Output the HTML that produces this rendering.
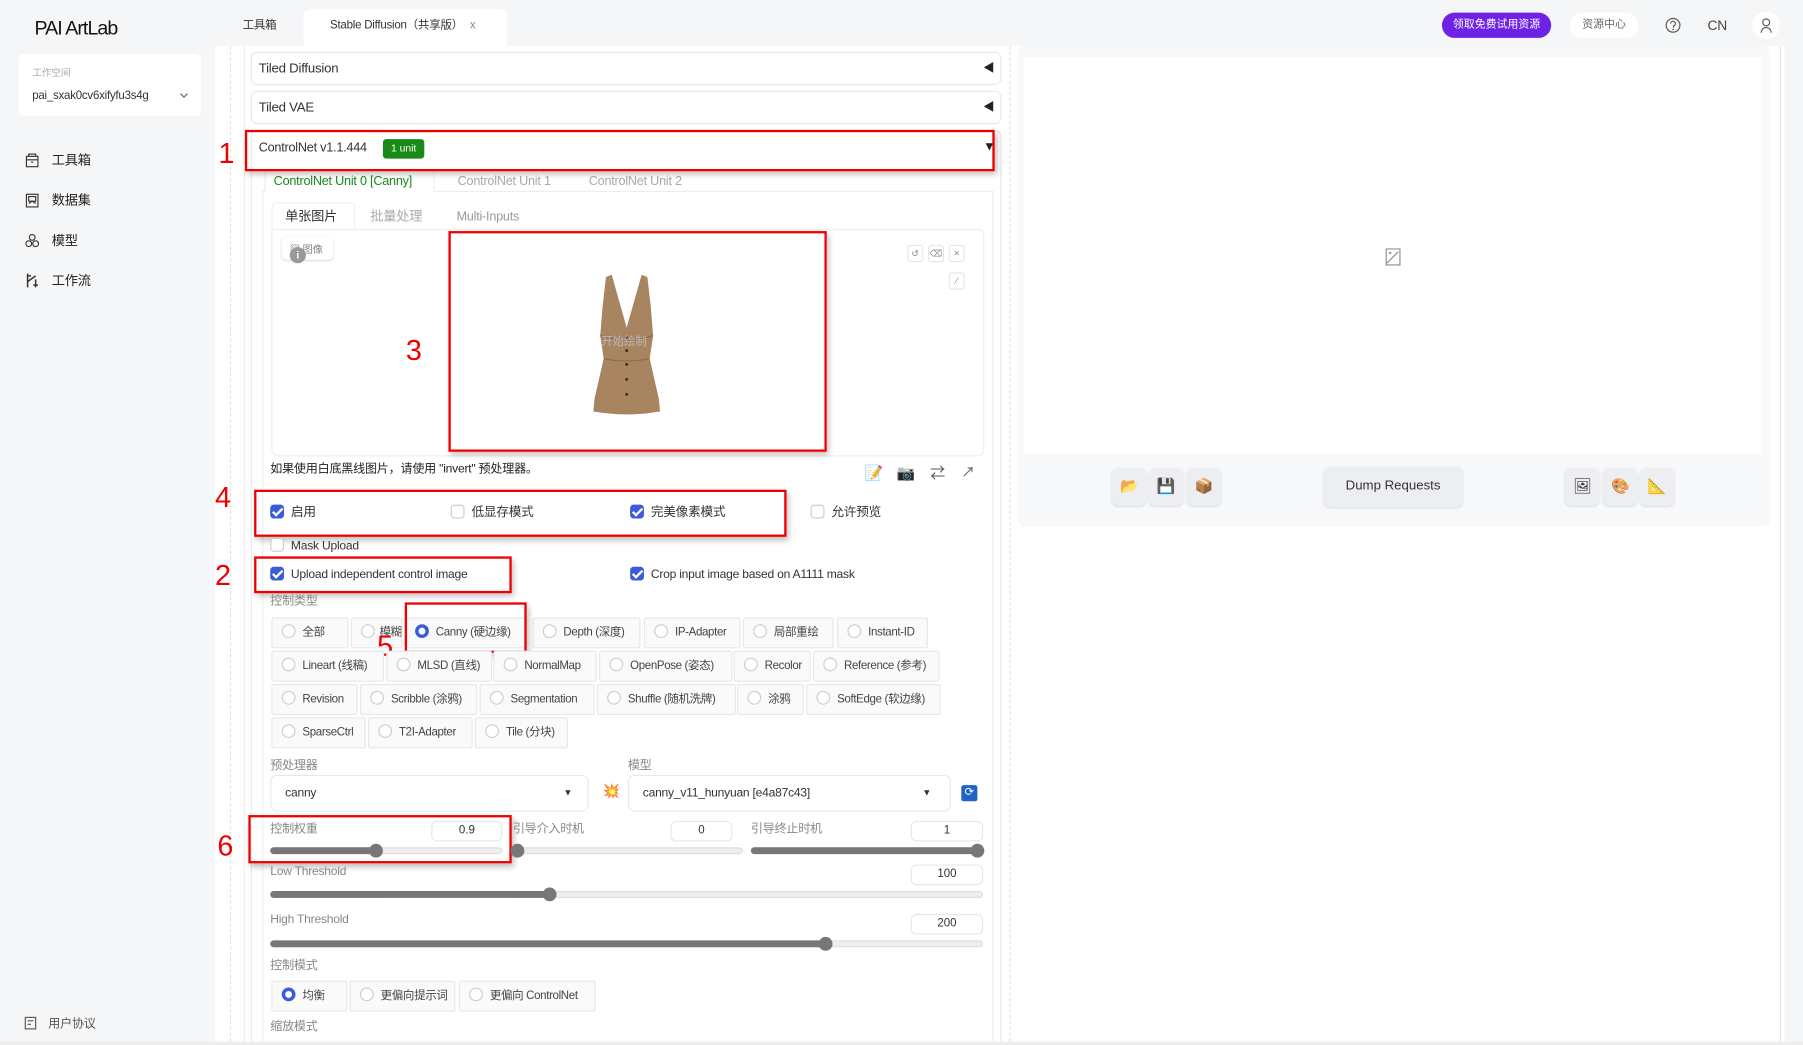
<!DOCTYPE html>
<html><head><meta charset="utf-8">
<style>
*{box-sizing:border-box;margin:0;padding:0}
html,body{width:1803px;height:1045px;overflow:hidden;background:#f5f6f8}
body{font-family:"Liberation Sans","Noto Sans CJK SC",sans-serif;color:#333}
#w{position:absolute;left:0;top:0;width:1568px;height:909px;transform:scale(1.14987,1.1496);transform-origin:0 0;background:#f5f6f8}
.a{position:absolute}
.t{position:absolute;white-space:nowrap;font-size:11px;line-height:14px;letter-spacing:-0.2px}
.box{position:absolute;border:1px solid #e5e7eb;border-radius:6px;background:#fff}
.red{position:absolute;border:2.5px solid #e00;box-shadow:2px 3px 5px rgba(0,0,0,.25)}
.num{position:absolute;color:#e00;font-size:25px;line-height:26px;font-family:"Liberation Sans",sans-serif}
.cb{position:absolute;width:12px;height:12px;border:1px solid #ccc;border-radius:3px;background:#fff}
.cb.on{background:#3b5bdb;border-color:#3b5bdb}
.cb.on:after{content:"";position:absolute;left:3px;top:0px;width:3px;height:7px;border:solid #fff;border-width:0 2px 2px 0;transform:rotate(45deg)}
.rb{position:absolute;border:1px solid #e5e7eb;background:#fafafa;border-radius:2px;height:27px;font-size:10px;line-height:25px;white-space:nowrap;color:#444;letter-spacing:-0.3px;overflow:hidden}
.rb i{display:inline-block;width:12px;height:12px;border:1px solid #ccc;border-radius:50%;vertical-align:-2px;margin:0 6px 0 8px;background:#fff}
.rb i.on{border:3.5px solid #3b5bdb}
.lbl{position:absolute;font-size:10.5px;color:#888;white-space:nowrap;letter-spacing:-0.2px}
.inp{position:absolute;border:1px solid #e5e7eb;border-radius:5px;background:#fff;font-size:10px;text-align:center;line-height:16px;height:18px;color:#333}
.trk{position:absolute;height:6px;border-radius:3px;background:#eee;border:1px solid #ddd}
.fill{position:absolute;height:6px;border-radius:3px;background:#777}
.th{position:absolute;width:12px;height:12px;border-radius:50%;background:#777}
.ib{position:absolute;width:30px;height:33px;border-radius:6px;background:#eceef1;box-shadow:0 1px 2px rgba(0,0,0,.1)}
</style></head><body><div id="w">

<div class="t" style="left:30px;top:15px;font-size:17px;line-height:20px;color:#111;letter-spacing:-0.8px">PAI ArtLab</div>
<div class="t" style="left:211px;top:16px;font-size:10px;color:#333">工具箱</div>
<div class="a" style="left:264px;top:8px;width:177px;height:33px;background:#fff;border-radius:6px 6px 0 0"></div>
<div class="t" style="left:287px;top:16px;font-size:10px;color:#333">Stable Diffusion（共享版）<span style="color:#888;margin-left:6px">x</span></div>
<div class="a" style="left:1254px;top:11px;width:95px;height:22px;border-radius:11px;background:#6d22e6;color:#fff;font-size:9.5px;line-height:22px;text-align:center">领取免费试用资源</div>
<div class="a" style="left:1365px;top:11px;width:60px;height:22px;border-radius:11px;background:#fff;color:#666;font-size:9.5px;line-height:22px;text-align:center">资源中心</div>
<svg class="a" style="left:1448px;top:15px" width="14" height="14" viewBox="0 0 14 14"><circle cx="7" cy="7" r="6" fill="none" stroke="#555" stroke-width="1"/><path d="M5 5.5a2 2 0 1 1 2.5 1.9V9" fill="none" stroke="#555"/><circle cx="7" cy="10.7" r=".7" fill="#555"/></svg>
<div class="t" style="left:1485px;top:15px;font-size:12px;color:#444">CN</div>
<div class="a" style="left:1524px;top:10px;width:24px;height:24px;border-radius:50%;background:#fff"></div>
<svg class="a" style="left:1530px;top:15px" width="12" height="14" viewBox="0 0 12 14"><circle cx="6" cy="4.5" r="3" fill="none" stroke="#555"/><path d="M1.5 13.5c.5-3 2-4.5 4.5-4.5s4 1.5 4.5 4.5" fill="none" stroke="#555"/></svg>

<div class="a" style="left:16px;top:47px;width:159px;height:54px;background:#fff;border-radius:5px"></div>
<div class="t" style="left:28px;top:56px;font-size:8.5px;color:#aaa">工作空间</div>
<div class="t" style="left:28px;top:77px;font-size:10px;color:#333">pai_sxak0cv6xifyfu3s4g</div>
<svg class="a" style="left:156px;top:80px" width="8" height="6" viewBox="0 0 8 6"><path d="M1 1.5l3 3 3-3" fill="none" stroke="#666"/></svg>
<svg class="a" style="left:22px;top:133px" width="12" height="13" viewBox="0 0 12 13"><rect x="1" y="3" width="10" height="9" fill="none" stroke="#333"/><path d="M3 3V1h6v2M1 6h10M5 8h2" stroke="#333" fill="none"/></svg>
<div class="t" style="left:45px;top:133px;font-size:11.5px;color:#222">工具箱</div>
<svg class="a" style="left:22px;top:168px" width="12" height="13" viewBox="0 0 12 13"><rect x="1" y="1" width="10" height="11" fill="none" stroke="#333"/><path d="M3 3h6v4H3zM3 9l3-2 3 2" stroke="#333" fill="none"/></svg>
<div class="t" style="left:45px;top:168px;font-size:11.5px;color:#222">数据集</div>
<svg class="a" style="left:22px;top:203px" width="12" height="13" viewBox="0 0 12 13"><circle cx="6" cy="3.5" r="2.5" fill="none" stroke="#333"/><circle cx="3" cy="9" r="2.5" fill="none" stroke="#333"/><circle cx="9" cy="9" r="2.5" fill="none" stroke="#333"/></svg>
<div class="t" style="left:45px;top:203px;font-size:11.5px;color:#222">模型</div>
<svg class="a" style="left:22px;top:237px" width="12" height="14" viewBox="0 0 12 14"><path d="M2 1v12M2 3h3M2 8l7-5M9 6v7M7 11h4" stroke="#333" fill="none" stroke-width="1.3"/></svg>
<div class="t" style="left:45px;top:238px;font-size:11.5px;color:#222">工作流</div>
<svg class="a" style="left:21px;top:884px" width="12" height="12" viewBox="0 0 12 12"><rect x="1" y="1" width="9" height="10" fill="none" stroke="#555"/><path d="M3 4h5M3 7h3" stroke="#555"/></svg>
<div class="t" style="left:42px;top:884px;font-size:10.5px;color:#555">用户协议</div>

<div class="a" style="left:187px;top:40px;width:1365px;height:866px;background:#fff"></div>
<div class="a" style="left:200px;top:40px;width:1px;height:866px;border-left:1px dashed #e3e3e3"></div>
<div class="a" style="left:212px;top:40px;width:1px;height:866px;background:#eee"></div>
<div class="a" style="left:878px;top:40px;width:1px;height:866px;border-left:1px dashed #e3e3e3"></div>
<div class="a" style="left:1548px;top:40px;width:1px;height:866px;background:#e5e5e5"></div>
<div class="a" style="left:0;top:906px;width:1568px;height:3px;background:#eee"></div>

<div class="box" style="left:218px;top:45px;width:653px;height:29px"></div>
<div class="t" style="left:225px;top:53px;font-size:11.5px;color:#333">Tiled Diffusion</div>
<div class="t" style="left:855px;top:53px;font-size:10px;color:#222">◀</div>
<div class="box" style="left:218px;top:79px;width:653px;height:29px"></div>
<div class="t" style="left:225px;top:87px;font-size:11.5px;color:#333">Tiled VAE</div>
<div class="t" style="left:855px;top:87px;font-size:10px;color:#222">◀</div>
<div class="box" style="left:218px;top:113px;width:653px;height:793px;border-bottom:none;border-radius:6px 6px 0 0"></div>
<div class="t" style="left:225px;top:122px;font-size:11px;color:#333">ControlNet v1.1.444</div>
<div class="a" style="left:333px;top:121px;width:36px;height:17px;background:#178a17;border-radius:3px;color:#fff;font-size:9px;line-height:17px;text-align:center">1 unit</div>
<div class="t" style="left:855px;top:121px;font-size:11px;color:#222">▼</div>

<div class="a" style="left:228px;top:166px;width:636px;height:740px;border:1px solid #eee;border-bottom:none"></div>
<div class="a" style="left:230px;top:147px;width:148px;height:21px;background:#fff;border:1px solid #eee;border-bottom:none;border-radius:4px 4px 0 0"></div>
<div class="t" style="left:238px;top:151px;font-size:11px;color:#1a8a1a">ControlNet Unit 0 [Canny]</div>
<div class="t" style="left:398px;top:151px;font-size:11px;color:#aaa">ControlNet Unit 1</div>
<div class="t" style="left:512px;top:151px;font-size:11px;color:#aaa">ControlNet Unit 2</div>

<div class="a" style="left:236px;top:176px;width:73px;height:24px;background:#fff;border:1px solid #eee;border-bottom:none;border-radius:4px 4px 0 0"></div>
<div class="t" style="left:248px;top:182px;font-size:11.5px;color:#333">单张图片</div>
<div class="t" style="left:322px;top:182px;font-size:11.5px;color:#aaa">批量处理</div>
<div class="t" style="left:397px;top:182px;font-size:11px;color:#999">Multi-Inputs</div>
<div class="a" style="left:236px;top:199px;width:620px;height:198px;border:1px solid #eee;border-radius:0 6px 6px 6px;background:#fff"></div>
<div class="a" style="left:245px;top:206px;width:45px;height:20px;border-radius:4px;box-shadow:0 1px 2px rgba(0,0,0,.15);background:#fff"></div>
<div class="t" style="left:252px;top:210px;font-size:9px;color:#888">▧ 图像</div>
<div class="a" style="left:252px;top:215px;width:14px;height:14px;border-radius:50%;background:#999;color:#fff;font-size:9px;text-align:center;line-height:14px;font-weight:bold">i</div>
<div class="a" style="left:789px;top:213px;width:14px;height:15px;border:1px solid #e5e5e5;border-radius:3px;font-size:8px;color:#888;text-align:center;line-height:13px">↺</div>
<div class="a" style="left:807px;top:213px;width:14px;height:15px;border:1px solid #e5e5e5;border-radius:3px;font-size:8px;color:#888;text-align:center;line-height:13px">⌫</div>
<div class="a" style="left:825px;top:213px;width:14px;height:15px;border:1px solid #e5e5e5;border-radius:3px;font-size:9px;color:#888;text-align:center;line-height:13px">×</div>
<div class="a" style="left:825px;top:237px;width:14px;height:15px;border:1px solid #e5e5e5;border-radius:3px;font-size:8px;color:#888;text-align:center;line-height:13px">⁄</div>

<svg class="a" style="left:505px;top:237px" width="80" height="126" viewBox="0 0 80 126">
<path d="M22 4 L27 2 L40 48 L53 2 L58 4 L61 30 L63 55 L60 75 L68 110 L69 121 Q40 126 11 121 L12 110 L20 75 L17 55 L19 30 Z" fill="#a98460"/>
<path d="M17 55 Q40 62 63 55 M20 75 Q40 79 60 75" stroke="#8f6c4a" fill="none" stroke-width="1"/>
<g fill="#333"><circle cx="40" cy="57" r="1.3"/><circle cx="40" cy="68" r="1.3"/><circle cx="40" cy="80" r="1.3"/><circle cx="40" cy="93" r="1.3"/><circle cx="40" cy="106" r="1.3"/></g>
</svg>
<div class="t" style="left:523px;top:291px;font-size:10px;color:#bbb">开始绘制</div>
<div class="red" style="left:390px;top:201px;width:329px;height:192px"></div>
<div class="num" style="left:353px;top:292px">3</div>

<div class="t" style="left:235px;top:401px;font-size:10.5px;color:#222">如果使用白底黑线图片，请使用 "invert" 预处理器。</div>
<div class="t" style="left:752px;top:405px;font-size:13px">📝</div>
<div class="t" style="left:780px;top:405px;font-size:13px">📷</div>
<div class="t" style="left:809px;top:405px;font-size:13px;color:#555">⇄</div>
<div class="t" style="left:836px;top:404px;font-size:12px;color:#555">↗</div>

<div class="cb on" style="left:235px;top:439px"></div><div class="t" style="left:253px;top:439px">启用</div>
<div class="cb" style="left:392px;top:439px"></div><div class="t" style="left:410px;top:439px">低显存模式</div>
<div class="cb on" style="left:548px;top:439px"></div><div class="t" style="left:566px;top:439px">完美像素模式</div>
<div class="cb" style="left:705px;top:439px"></div><div class="t" style="left:723px;top:439px">允许预览</div>
<div class="red" style="left:221px;top:426px;width:463px;height:41px"></div>
<div class="num" style="left:187px;top:420px">4</div>
<div class="cb" style="left:235px;top:468px"></div><div class="t" style="left:253px;top:468px;font-size:10.5px">Mask Upload</div>
<div class="cb on" style="left:235px;top:493px"></div><div class="t" style="left:253px;top:493px;font-size:10.5px">Upload independent control image</div>
<div class="cb on" style="left:548px;top:493px"></div><div class="t" style="left:566px;top:493px;font-size:10.5px">Crop input image based on A1111 mask</div>
<div class="red" style="left:221px;top:484px;width:224px;height:32px"></div>
<div class="num" style="left:187px;top:488px">2</div>

<div class="lbl" style="left:235px;top:515px">控制类型</div>
<div class="rb" style="left:236px;top:537px;width:67px"><i></i>全部</div>
<div class="rb" style="left:305px;top:537px;width:45px"><i style="margin-right:4px"></i>模糊</div>
<div class="rb" style="left:352px;top:537px;width:106px"><i class="on"></i>Canny (硬边缘)</div>
<div class="rb" style="left:463px;top:537px;width:94px"><i></i>Depth (深度)</div>
<div class="rb" style="left:560px;top:537px;width:84px"><i></i>IP-Adapter</div>
<div class="rb" style="left:646px;top:537px;width:79px"><i></i>局部重绘</div>
<div class="rb" style="left:728px;top:537px;width:79px"><i></i>Instant-ID</div>
<div class="red" style="left:352px;top:524px;width:106px;height:44px"></div>
<div class="num" style="left:328px;top:549px">5</div>
<div class="rb" style="left:236px;top:566px;width:98px"><i></i>Lineart (线稿)</div>
<div class="rb" style="left:336px;top:566px;width:92px"><i></i>MLSD (直线)</div>
<div class="rb" style="left:429px;top:566px;width:90px"><i></i>NormalMap</div>
<div class="rb" style="left:521px;top:566px;width:116px"><i></i>OpenPose (姿态)</div>
<div class="rb" style="left:638px;top:566px;width:67px"><i></i>Recolor</div>
<div class="rb" style="left:707px;top:566px;width:110px"><i></i>Reference (参考)</div>
<div class="rb" style="left:236px;top:595px;width:75px"><i></i>Revision</div>
<div class="rb" style="left:313px;top:595px;width:102px"><i></i>Scribble (涂鸦)</div>
<div class="rb" style="left:417px;top:595px;width:100px"><i></i>Segmentation</div>
<div class="rb" style="left:519px;top:595px;width:121px"><i></i>Shuffle (随机洗牌)</div>
<div class="rb" style="left:641px;top:595px;width:58px"><i></i>涂鸦</div>
<div class="rb" style="left:701px;top:595px;width:117px"><i></i>SoftEdge (软边缘)</div>
<div class="rb" style="left:236px;top:624px;width:82px"><i></i>SparseCtrl</div>
<div class="rb" style="left:320px;top:624px;width:91px"><i></i>T2I-Adapter</div>
<div class="rb" style="left:413px;top:624px;width:81px"><i></i>Tile (分块)</div>

<div class="lbl" style="left:235px;top:658px">预处理器</div>
<div class="lbl" style="left:546px;top:658px">模型</div>
<div class="a" style="left:235px;top:674px;width:277px;height:32px;border:1px solid #e8e8e8;border-radius:6px"></div>
<div class="t" style="left:248px;top:683px;font-size:10.5px">canny</div>
<div class="t" style="left:490px;top:683px;font-size:8px">▼</div>
<div class="t" style="left:524px;top:681px;font-size:12px">💥</div>
<div class="a" style="left:546px;top:674px;width:281px;height:32px;border:1px solid #e8e8e8;border-radius:6px"></div>
<div class="t" style="left:559px;top:683px;font-size:10.5px">canny_v11_hunyuan [e4a87c43]</div>
<div class="t" style="left:802px;top:683px;font-size:8px">▼</div>
<div class="a" style="left:836px;top:683px;width:14px;height:14px;background:#1f63c6;border-radius:2px;color:#fff;font-size:10px;text-align:center;line-height:14px">⟳</div>

<div class="lbl" style="left:235px;top:713px">控制权重</div>
<div class="inp" style="left:375px;top:714px;width:62px">0.9</div>
<div class="trk" style="left:235px;top:737px;width:202px"></div><div class="fill" style="left:235px;top:737px;width:94px"></div><div class="th" style="left:321px;top:734px"></div>
<div class="red" style="left:216px;top:709px;width:229px;height:42px"></div>
<div class="num" style="left:189px;top:723px">6</div>
<div class="lbl" style="left:446px;top:713px">引导介入时机</div>
<div class="inp" style="left:583px;top:714px;width:54px">0</div>
<div class="trk" style="left:446px;top:737px;width:200px"></div><div class="th" style="left:444px;top:734px"></div>
<div class="lbl" style="left:653px;top:713px">引导终止时机</div>
<div class="inp" style="left:792px;top:714px;width:63px">1</div>
<div class="trk" style="left:653px;top:737px;width:202px"></div><div class="fill" style="left:653px;top:737px;width:200px"></div><div class="th" style="left:844px;top:734px"></div>
<div class="lbl" style="left:235px;top:752px">Low Threshold</div>
<div class="inp" style="left:792px;top:752px;width:63px">100</div>
<div class="trk" style="left:235px;top:775px;width:620px"></div><div class="fill" style="left:235px;top:775px;width:245px"></div><div class="th" style="left:472px;top:772px"></div>
<div class="lbl" style="left:235px;top:794px">High Threshold</div>
<div class="inp" style="left:792px;top:795px;width:63px">200</div>
<div class="trk" style="left:235px;top:818px;width:620px"></div><div class="fill" style="left:235px;top:818px;width:485px"></div><div class="th" style="left:712px;top:815px"></div>

<div class="lbl" style="left:235px;top:832px">控制模式</div>
<div class="rb" style="left:236px;top:853px;width:66px"><i class="on"></i>均衡</div>
<div class="rb" style="left:304px;top:853px;width:92px"><i></i>更偏向提示词</div>
<div class="rb" style="left:399px;top:853px;width:119px"><i></i>更偏向 ControlNet</div>
<div class="lbl" style="left:235px;top:885px">缩放模式</div>

<div class="red" style="left:213px;top:113px;width:652px;height:36px"></div>
<div class="num" style="left:190px;top:121px">1</div>

<div class="a" style="left:885px;top:40px;width:654px;height:418px;background:#f7f8fa;border-radius:6px"></div>
<div class="a" style="left:891px;top:50px;width:641px;height:345px;background:#fff"></div>
<svg class="a" style="left:1205px;top:216px" width="13" height="15" viewBox="0 0 13 15"><rect x=".5" y=".5" width="12" height="14" fill="none" stroke="#888"/><path d="M1 13L11 3" stroke="#888"/><circle cx="4" cy="4" r="1" fill="#888"/></svg>
<div class="ib" style="left:967px;top:407px"></div><div class="t" style="left:974px;top:416px;font-size:13px">📂</div>
<div class="ib" style="left:999px;top:407px"></div><div class="t" style="left:1006px;top:416px;font-size:13px">💾</div>
<div class="ib" style="left:1032px;top:407px"></div><div class="t" style="left:1039px;top:416px;font-size:13px">📦</div>
<div class="a" style="left:1151px;top:406px;width:121px;height:35px;border-radius:6px;background:#eceef1;box-shadow:0 1px 2px rgba(0,0,0,.1);font-size:11.5px;line-height:35px;text-align:center;color:#333">Dump Requests</div>
<div class="ib" style="left:1361px;top:407px"></div><div class="t" style="left:1368px;top:416px;font-size:13px">🖼</div>
<div class="ib" style="left:1394px;top:407px"></div><div class="t" style="left:1401px;top:416px;font-size:13px">🎨</div>
<div class="ib" style="left:1426px;top:407px"></div><div class="t" style="left:1433px;top:416px;font-size:13px">📐</div>

</div></body></html>
